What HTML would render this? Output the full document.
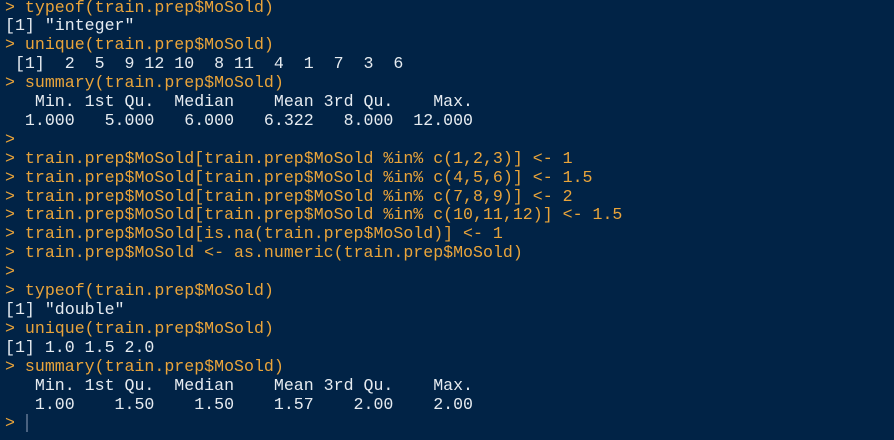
<!DOCTYPE html>
<html><head><style>
html,body{margin:0;padding:0;background:#012346;width:894px;height:440px;overflow:hidden}
pre{margin:0;position:absolute;left:5px;top:-1.5px;font-family:"Liberation Mono",monospace;font-size:16.6px;line-height:18.9px;color:#e6ebf0;white-space:pre}
.o{color:#eaa43a}
.c{display:inline-block;width:2px;height:18px;background:#4a6280;vertical-align:middle;margin-left:1px}
</style></head><body><pre><span class="o">&gt; typeof(train.prep$MoSold)</span>
[1] "integer"
<span class="o">&gt; unique(train.prep$MoSold)</span>
 [1]  2  5  9 12 10  8 11  4  1  7  3  6
<span class="o">&gt; summary(train.prep$MoSold)</span>
   Min. 1st Qu.  Median    Mean 3rd Qu.    Max. 
  1.000   5.000   6.000   6.322   8.000  12.000 
<span class="o">&gt; </span>
<span class="o">&gt; train.prep$MoSold[train.prep$MoSold %in% c(1,2,3)] &lt;- 1</span>
<span class="o">&gt; train.prep$MoSold[train.prep$MoSold %in% c(4,5,6)] &lt;- 1.5</span>
<span class="o">&gt; train.prep$MoSold[train.prep$MoSold %in% c(7,8,9)] &lt;- 2</span>
<span class="o">&gt; train.prep$MoSold[train.prep$MoSold %in% c(10,11,12)] &lt;- 1.5</span>
<span class="o">&gt; train.prep$MoSold[is.na(train.prep$MoSold)] &lt;- 1</span>
<span class="o">&gt; train.prep$MoSold &lt;- as.numeric(train.prep$MoSold)</span>
<span class="o">&gt; </span>
<span class="o">&gt; typeof(train.prep$MoSold)</span>
[1] "double"
<span class="o">&gt; unique(train.prep$MoSold)</span>
[1] 1.0 1.5 2.0
<span class="o">&gt; summary(train.prep$MoSold)</span>
   Min. 1st Qu.  Median    Mean 3rd Qu.    Max. 
   1.00    1.50    1.50    1.57    2.00    2.00 
<span class="o">&gt; </span><span class="c"></span></pre></body></html>
